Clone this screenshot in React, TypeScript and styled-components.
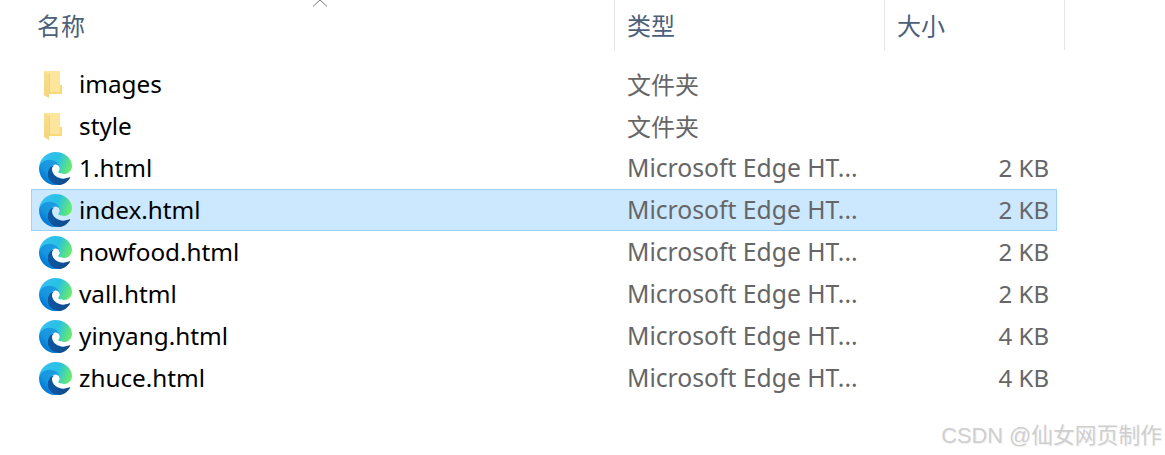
import styled, { createGlobalStyle } from "styled-components";

const GlobalStyle = createGlobalStyle`
  html, body {
    margin: 0;
    background: #fff;
  }
`;

const Page = styled.div`
  position: relative;
  width: 1165px;
  height: 455px;
  overflow: hidden;
  background: #fff;
  font-family: "Noto Sans", "Noto Sans CJK SC", "Open Sans", sans-serif;
  font-size: 24px;
`;

const Header = styled.div`
  display: grid;
  grid-template-columns: 614px 270px 180px 1px;
  height: 50px;
`;

const HeaderCell = styled.div<{ $pad: number; $divider?: boolean }>`
  display: flex;
  align-items: center;
  height: 50px;
  padding-left: ${(props) => props.$pad}px;
  padding-bottom: 2px;
  box-sizing: border-box;
  color: #4c607a;
  border-left: 1px solid ${(props) => (props.$divider ? "#e5e5e5" : "transparent")};
`;

const HeaderEnd = styled.div`
  background: #e5e5e5;
`;

const SortCaret = styled.svg`
  position: absolute;
  left: 312px;
  top: 0;
`;

const List = styled.div`
  width: 1026px;
  margin: 13px 0 0 31px;
`;

const Row = styled.div<{ $selected?: boolean }>`
  display: grid;
  grid-template-columns: 595px 1fr 100px;
  align-items: center;
  height: 42px;
  box-sizing: border-box;
  border: 1px solid ${(props) => (props.$selected ? "#99d1ff" : "transparent")};
  background: ${(props) => (props.$selected ? "#cce8ff" : "transparent")};
`;

const NameCell = styled.div`
  display: flex;
  align-items: center;
  color: #000;
  font-size: 24.3px;
  line-height: 38px;
  height: 40px;
`;

const IconSlot = styled.div`
  display: flex;
  align-items: center;
  width: 34px;
  height: 40px;
  margin: 0 7px 0 6px;
  flex: none;
`;

const TypeCell = styled.div<{ $cjk?: boolean }>`
  color: #666;
  font-size: ${(props) => (props.$cjk ? "24px" : "24.7px")};
  line-height: ${(props) => (props.$cjk ? "42px" : "40px")};
  height: 40px;
  white-space: nowrap;
`;

const SizeCell = styled.div`
  color: #666;
  text-align: right;
  padding-right: 7px;
  line-height: 40px;
  height: 40px;
`;

const Watermark = styled.div`
  position: absolute;
  right: 3px;
  top: 421px;
  color: #cfcfcf;
  font-family: "Liberation Sans", "Noto Sans CJK SC", sans-serif;
  font-size: 21.8px;
  line-height: 30px;
  white-space: nowrap;
  text-shadow: 1px 1px 1px #f0f0f0;
`;

const FolderSvg = styled.svg`
  margin-left: 6px;
`;

const EdgeSvg = styled.svg`
  margin-left: 1px;
`;

const FolderIcon = () => (
  <FolderSvg width="18" height="27" viewBox="0 0 18 27">
    <defs>
      <linearGradient id="folderFlap" x1="0" y1="0" x2="0" y2="1">
        <stop offset="0" stopColor="#f7dd8e" />
        <stop offset="1" stopColor="#f5d67c" />
      </linearGradient>
    </defs>
    <path d="M0 0 H16 V14 H18 V23 H5 V27 L0 24 Z" fill="#fde59b" />
    <path d="M16 14 H18 V23 H5 V21 H16 Z" fill="#fad976" />
    <path d="M0 0 L5 3 V27 L0 24 Z" fill="url(#folderFlap)" />
    <path d="M5 3 L6 3 V23 H5 Z" fill="#f3d27a" />
  </FolderSvg>
);

const EdgeIcon = ({ id }: { id: string }) => (
  <EdgeSvg width="33" height="33" viewBox="0 0 256 256">
    <defs>
      <linearGradient id={`${id}a`} x1="63" y1="176" x2="241" y2="176" gradientUnits="userSpaceOnUse">
        <stop offset="0" stopColor="#0c59a4" />
        <stop offset="1" stopColor="#114a8b" />
      </linearGradient>
      <linearGradient id={`${id}b`} x1="153" y1="100" x2="42" y2="221" gradientUnits="userSpaceOnUse">
        <stop offset="0" stopColor="#1b9de2" />
        <stop offset="0.6" stopColor="#1595df" />
        <stop offset="1" stopColor="#0078d4" />
      </linearGradient>
      <linearGradient id={`${id}c`} x1="25" y1="50" x2="240" y2="130" gradientUnits="userSpaceOnUse">
        <stop offset="0" stopColor="#35c1f1" />
        <stop offset="0.5" stopColor="#28c1e4" />
        <stop offset="1" stopColor="#66eb6e" />
      </linearGradient>
    </defs>
    <path
      fill={`url(#${id}a)`}
      d="M235.7 195.5a93.7 93.7 0 0 1-10.6 4.7 101.9 101.9 0 0 1-35.9 6.4c-47.3 0-88.5-32.5-88.5-74.3a31.5 31.5 0 0 1 16.4-27.3c-42.8 1.8-53.8 46.4-53.8 72.5 0 73.9 68.1 81.4 82.8 81.4 7.9 0 19.8-2.3 27-4.6l1.3-.4a128.3 128.3 0 0 0 66.6-52.8 4 4 0 0 0-5.3-5.6z"
    />
    <path
      fill={`url(#${id}b)`}
      d="M105.7 241.4A79.2 79.2 0 0 1 83 220.1a80.7 80.7 0 0 1 29.5-120c3.2-1.5 8.5-4.1 15.6-4a32.4 32.4 0 0 1 25.7 13 31.9 31.9 0 0 1 6.3 18.7c0-.2 24.5-79.6-80-79.6-43.9 0-80 41.6-80 78.2a130.2 130.2 0 0 0 12.1 56 128 128 0 0 0 156.4 67 75.5 75.5 0 0 1-63-8z"
    />
    <path
      fill={`url(#${id}c)`}
      d="M152.3 148.9c-.8 1-3.3 2.5-3.3 5.7 0 2.6 1.7 5.1 4.7 7.2 14.4 10 41.5 8.7 41.6 8.7a59.6 59.6 0 0 0 30.3-8.4 61.4 61.4 0 0 0 30.4-52.9c.3-22.4-8-37.3-11.3-43.9C223.5 23.9 177.7 0 128 0A128 128 0 0 0 0 126.2c.5-36.5 36.8-66 80-66 3.5 0 23.5.3 42 10a72.6 72.6 0 0 1 30.9 29.3c6.1 10.6 7.2 24.1 7.2 29.5s-2.7 13.3-7.8 19.9z"
    />
  </EdgeSvg>
);

interface FileEntry {
  name: string;
  type: string;
  size?: string;
  selected?: boolean;
}

const files: FileEntry[] = [
  { name: "images", type: "文件夹" },
  { name: "style", type: "文件夹" },
  { name: "1.html", type: "Microsoft Edge HT...", size: "2 KB" },
  { name: "index.html", type: "Microsoft Edge HT...", size: "2 KB", selected: true },
  { name: "nowfood.html", type: "Microsoft Edge HT...", size: "2 KB" },
  { name: "vall.html", type: "Microsoft Edge HT...", size: "2 KB" },
  { name: "yinyang.html", type: "Microsoft Edge HT...", size: "4 KB" },
  { name: "zhuce.html", type: "Microsoft Edge HT...", size: "4 KB" },
];

const App = () => (
  <Page>
    <GlobalStyle />
    <Header>
      <HeaderCell $pad={36}>名称</HeaderCell>
      <HeaderCell $pad={12} $divider>类型</HeaderCell>
      <HeaderCell $pad={12} $divider>大小</HeaderCell>
      <HeaderEnd />
    </Header>
    <SortCaret width="16" height="8" viewBox="0 0 16 8">
      <path d="M1 6.5 L8 0 L15 6.5" fill="none" stroke="#7a7a7a" strokeWidth="1" />
    </SortCaret>
    <List>
      {files.map((file, i) => (
        <Row key={file.name} $selected={file.selected}>
          <NameCell>
            <IconSlot>{file.size ? <EdgeIcon id={`edge${i}`} /> : <FolderIcon />}</IconSlot>
            {file.name}
          </NameCell>
          <TypeCell $cjk={!file.size}>{file.type}</TypeCell>
          <SizeCell>{file.size}</SizeCell>
        </Row>
      ))}
    </List>
    <Watermark>CSDN @仙女网页制作</Watermark>
  </Page>
);

export default App;
